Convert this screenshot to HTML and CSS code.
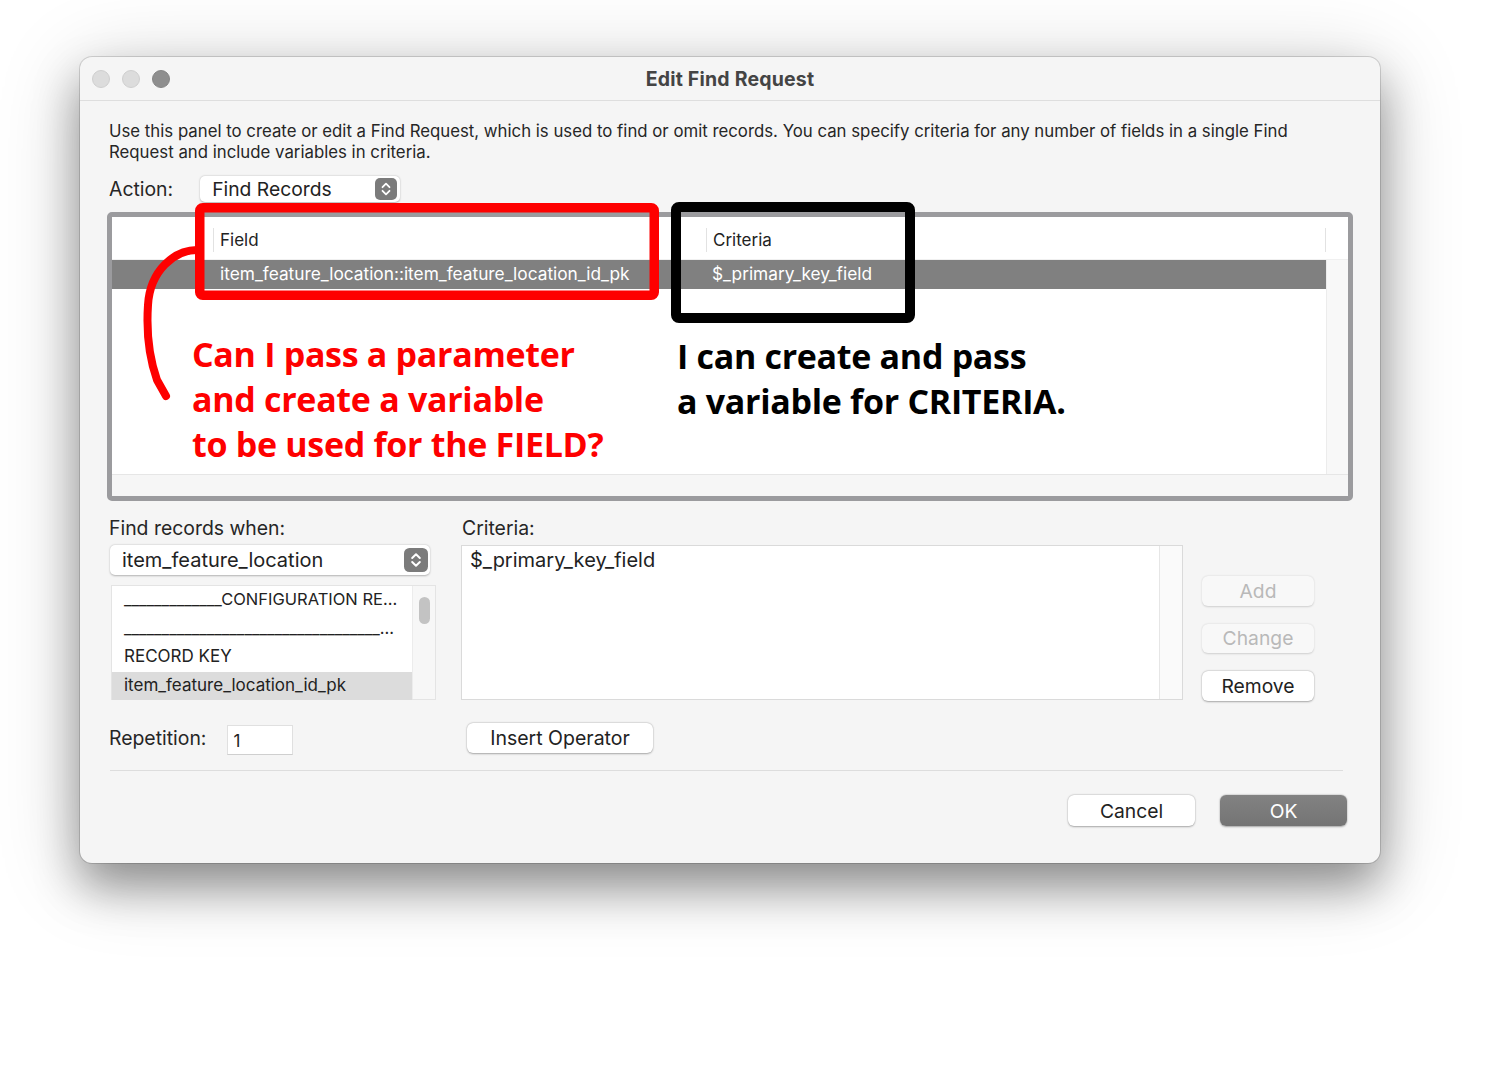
FILE: index.html
```html
<!DOCTYPE html>
<html lang="en">
<head>
    <meta charset="UTF-8">
    <title>Edit Find Request</title>
    <link rel="stylesheet" href="styles.css">
</head>
<body>
    <div class="window">
        <div class="titlebar">
            <div class="lights">
                <span class="light"></span>
                <span class="light"></span>
                <span class="light dark"></span>
            </div>
            <div class="title">Edit Find Request</div>
        </div>

        <div class="content">
            <p class="intro">Use this panel to create or edit a Find Request, which is used to find or omit records. You can specify criteria for any number of fields in a single Find<br>Request and include variables in criteria.</p>

            <div class="action-row">
                <span class="label">Action:</span>
                <div class="popup action-popup">
                    <span>Find Records</span>
                    <svg class="stepper" viewBox="0 0 22 22"><rect width="22" height="22" rx="5"/><path d="M7.5 9.2 L11 5.7 L14.5 9.2 M7.5 12.8 L11 16.3 L14.5 12.8"/></svg>
                </div>
            </div>

            <div class="request-table">
                <div class="table-head">
                    <div class="cell cell-omit"></div>
                    <div class="cell cell-field"><span class="head-text">Field</span></div>
                    <div class="cell cell-criteria"><span class="head-text">Criteria</span></div>
                    <div class="cell cell-end"></div>
                </div>
                <div class="table-body">
                    <div class="rows">
                        <div class="row selected">
                            <div class="cell cell-omit"></div>
                            <div class="cell cell-field">item_feature_location::item_feature_location_id_pk</div>
                            <div class="cell cell-criteria">$_primary_key_field</div>
                        </div>
                    </div>
                    <div class="vscroll"></div>
                </div>
                <div class="hscroll"></div>
            </div>

            <div class="editor">
                <div class="editor-left">
                    <div class="label">Find records when:</div>
                    <div class="popup table-popup">
                        <span>item_feature_location</span>
                        <svg class="stepper" viewBox="0 0 22 22"><rect width="22" height="22" rx="5"/><path d="M7.5 9.2 L11 5.7 L14.5 9.2 M7.5 12.8 L11 16.3 L14.5 12.8"/></svg>
                    </div>
                    <div class="field-list">
                        <div class="items">
                            <div class="item separator">_____________CONFIGURATION RE...</div>
                            <div class="item separator">__________________________________...</div>
                            <div class="item">RECORD KEY</div>
                            <div class="item current">item_feature_location_id_pk</div>
                        </div>
                        <div class="list-scroll"><span class="thumb"></span></div>
                    </div>
                    <div class="repetition">
                        <span class="label">Repetition:</span>
                        <div class="rep-input">1</div>
                    </div>
                </div>

                <div class="editor-middle">
                    <div class="label">Criteria:</div>
                    <div class="criteria-box">
                        <div class="criteria-text">$_primary_key_field</div>
                        <div class="criteria-scroll"></div>
                    </div>
                    <button class="btn insert">Insert Operator</button>
                </div>

                <div class="editor-right">
                    <button class="btn side disabled">Add</button>
                    <button class="btn side disabled">Change</button>
                    <button class="btn side">Remove</button>
                </div>
            </div>

            <div class="divider"></div>

            <div class="footer">
                <button class="btn dialog">Cancel</button>
                <button class="btn dialog ok">OK</button>
            </div>
        </div>

        <!-- annotations drawn over the screenshot -->
        <svg class="marks" viewBox="0 0 1300 806">
            <rect class="mark-red" x="119.75" y="150.75" width="454.5" height="87.5" rx="3"/>
            <rect class="mark-black" x="596" y="150" width="234" height="111" rx="3"/>
            <path class="mark-curve" d="M117 193 C95 193 70 213 68 248 C66 278 70 303 77 323 L86 339"/>
        </svg>
        <div class="note note-red">Can I pass a parameter<br>and create a variable<br>to be used for the FIELD?</div>
        <div class="note note-black">I can create and pass<br>a variable for CRITERIA.</div>
    </div>
</body>
</html>
```

FILE: styles.css
```css
* {
    margin: 0;
    padding: 0;
    box-sizing: border-box;
}

body {
    min-height: 1066px;
    padding-top: 57px;
    background: #ffffff;
    font-family: 'Inter', 'Liberation Sans', sans-serif;
    color: #222222;
}

.window {
    position: relative;
    width: 1300px;
    height: 806px;
    margin-left: 80px;
    background: #f5f5f5;
    border-radius: 12px;
    box-shadow: 0 24px 45px rgba(0, 0, 0, 0.36), 0 12px 85px rgba(0, 0, 0, 0.2), 0 0 0 1px rgba(0, 0, 0, 0.14);
}

.titlebar {
    position: relative;
    height: 44px;
    border-bottom: 1px solid #dedede;
    display: flex;
    align-items: center;
    justify-content: center;
}

.lights {
    position: absolute;
    left: 12px;
    top: 13px;
    display: flex;
    gap: 12px;
}

.light {
    width: 18px;
    height: 18px;
    border-radius: 50%;
    background: #dcdcdc;
    border: 1px solid #cfcfcf;
}

.light.dark {
    background: #8e8e8e;
    border-color: #858585;
}

.title {
    font-size: 19.5px;
    font-weight: 700;
    color: #444444;
    letter-spacing: 0.2px;
}

.content {
    padding: 20px 27px 0 29px;
}

.intro {
    font-size: 16.8px;
    line-height: 21px;
    color: #262626;
}

.label {
    font-size: 19.4px;
    line-height: 22px;
    color: #262626;
}

.action-row {
    display: flex;
    align-items: center;
    margin-top: 13px;
    height: 26px;
}

.popup {
    display: flex;
    align-items: center;
    justify-content: space-between;
    background: #ffffff;
    border-radius: 5px;
    box-shadow: 0 0.5px 2px rgba(0, 0, 0, 0.28);
    font-size: 19.3px;
    color: #222222;
}

.action-popup {
    width: 200px;
    height: 26px;
    margin-left: 27px;
    padding: 0 3px 0 12px;
}

.stepper {
    width: 22px;
    height: 22px;
}

.stepper rect {
    fill: #7b7b7b;
}

.stepper path {
    fill: none;
    stroke: #ffffff;
    stroke-width: 1.8;
    stroke-linecap: round;
    stroke-linejoin: round;
}

/* request table */

.request-table {
    margin: 10px 0 0 -2px;
    width: 1246px;
    height: 289px;
    border: 5px solid #9b9b9e;
    border-radius: 5px;
    background: #ffffff;
    display: flex;
    flex-direction: column;
}

.table-head {
    display: flex;
    height: 43px;
    border-bottom: 1px solid #f0f0f0;
    font-size: 17px;
    align-items: center;
    padding-top: 3px;
}

.cell {
    white-space: nowrap;
}

.cell-omit {
    width: 101px;
}

.cell-field {
    width: 493px;
}

.cell-criteria {
    width: 619px;
}

.table-head .cell {
    height: 24px;
    display: flex;
    align-items: center;
}

.table-head .cell-field,
.table-head .cell-criteria,
.table-head .cell-end {
    border-left: 1px solid #e2e2e2;
}

.head-text {
    padding-left: 6px;
    color: #222222;
}

.table-body {
    flex: 1;
    display: flex;
}

.rows {
    width: 1214px;
    background: #ffffff;
}

.row {
    display: flex;
    height: 29px;
    align-items: center;
    font-size: 17.3px;
    padding-bottom: 3px;
}

.row.selected {
    background: #808080;
    color: #ffffff;
}

.row .cell-field {
    padding-left: 7px;
}

.row .cell-criteria {
    padding-left: 6px;
}

.vscroll {
    flex: 1;
    background: #f8f8f8;
    border-left: 1px solid #ececec;
}

.hscroll {
    height: 22px;
    background: #f6f6f6;
    border-top: 1px solid #e6e6e6;
}

/* lower editor */

.editor {
    display: flex;
    margin-top: 16px;
}

.editor-left {
    width: 327px;
}

.table-popup {
    width: 320px;
    height: 30px;
    margin: 6px 0 0 1px;
    padding: 0 2px 0 12px;
    font-size: 20px;
}

.table-popup .stepper {
    width: 24px;
    height: 24px;
}

.field-list {
    display: flex;
    width: 325px;
    height: 115px;
    margin: 10px 0 0 2px;
    background: #ffffff;
    border: 1px solid #e4e4e4;
}

.items {
    width: 300px;
}

.item {
    height: 28.5px;
    line-height: 26px;
    padding: 0 12px;
    font-size: 17px;
    color: #222222;
    white-space: nowrap;
    overflow: hidden;
}

.item.separator {
    font-size: 16.5px;
}

.item.current {
    background: #dcdcdc;
}

.list-scroll {
    flex: 1;
    background: #f7f7f7;
    border-left: 1px solid #ececec;
    padding: 11px 0 0 6px;
}

.thumb {
    display: block;
    width: 11px;
    height: 27px;
    border-radius: 6px;
    background: #c3c3c3;
}

.repetition {
    display: flex;
    align-items: center;
    margin-top: 25px;
}

.repetition .label {
    margin-bottom: 5px;
}

.rep-input {
    width: 66px;
    height: 30px;
    margin-left: 21px;
    padding: 5px 0 0 5px;
    background: #ffffff;
    border: 1px solid #e0e0e0;
    border-bottom-color: #cfcfcf;
    font-size: 17px;
}

.editor-middle {
    width: 722px;
    margin-left: 25px;
}

.editor-middle .label {
    margin-left: 1px;
}

.criteria-box {
    display: flex;
    height: 155px;
    margin-top: 6px;
    background: #ffffff;
    border: 1px solid #dadada;
}

.criteria-text {
    flex: 1;
    padding: 2px 0 0 8px;
    font-size: 20px;
    color: #222222;
}

.criteria-scroll {
    width: 23px;
    background: #fafafa;
    border-left: 1px solid #e6e6e6;
}

.btn {
    display: flex;
    align-items: center;
    justify-content: center;
    font-family: 'Inter', 'Liberation Sans', sans-serif;
    font-size: 19.3px;
    color: #222222;
    background: #ffffff;
    border: none;
    border-radius: 6px;
    box-shadow: 0 0.5px 2px rgba(0, 0, 0, 0.3), 0 0 0 0.5px rgba(0, 0, 0, 0.06);
}

.btn.insert {
    width: 186px;
    height: 30px;
    margin: 23px 0 0 6px;
    font-size: 19.5px;
}

.editor-right {
    display: flex;
    flex-direction: column;
    gap: 18px;
    margin-left: 19px;
    padding-top: 59px;
}

.btn.side {
    width: 112px;
    height: 29.5px;
}

.btn.disabled {
    color: #b9b9b9;
    background: #f8f8f8;
    box-shadow: 0 0.5px 2px rgba(0, 0, 0, 0.16);
}

.divider {
    width: 1233px;
    margin: 15px 0 0 1px;
    border-top: 1px solid #dddddd;
}

.footer {
    display: flex;
    justify-content: flex-end;
    gap: 25px;
    margin-top: 24px;
    padding-right: 6px;
}

.btn.dialog {
    width: 127px;
    height: 31px;
    font-size: 19.3px;
}

.btn.ok {
    background: linear-gradient(#828282, #747474);
    color: #ffffff;
}

/* annotations */

.marks {
    position: absolute;
    left: 0;
    top: 0;
    width: 1300px;
    height: 806px;
    pointer-events: none;
}

.mark-red {
    fill: none;
    stroke: #fe0000;
    stroke-width: 9.5;
}

.mark-black {
    fill: none;
    stroke: #000000;
    stroke-width: 10;
}

.mark-curve {
    fill: none;
    stroke: #fe0000;
    stroke-width: 8;
    stroke-linecap: round;
    stroke-linejoin: round;
}

.note {
    position: absolute;
    font-family: 'Open Sans', sans-serif;
    font-weight: 700;
    font-size: 34px;
    line-height: 45px;
    letter-spacing: -0.3px;
    white-space: nowrap;
}

.note-red {
    left: 112px;
    top: 275px;
    color: #fe0000;
}

.note-black {
    left: 597px;
    top: 277px;
    color: #000000;
}
```
